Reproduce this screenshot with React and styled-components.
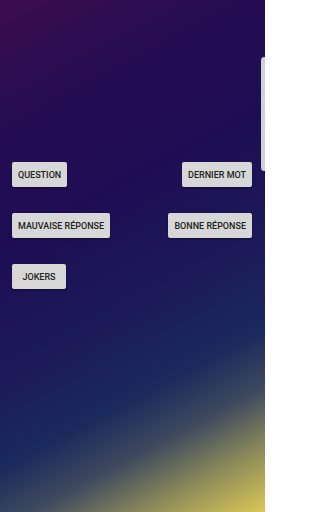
import React from 'react'
import styled, { createGlobalStyle } from 'styled-components'

const GlobalStyle = createGlobalStyle`
  html, body, #root {
    margin: 0;
    padding: 0;
  }
  body {
    font-family: Roboto, "Liberation Sans", sans-serif;
    overflow: hidden;
  }
`

const Screen = styled.div`
  position: relative;
  width: 265px;
  height: 512px;
  overflow: hidden;
  box-sizing: border-box;
  padding: 162px 13px 0 12px;
  background: linear-gradient(
    152deg,
    #3d0c4e 0%,
    #270d52 18%,
    #1e0d55 38%,
    #1c1a58 58%,
    #1b2a5d 72%,
    #3f4a5e 81%,
    #8c8a5a 90%,
    #dcc756 100%
  );
`

const Grid = styled.div`
  display: flex;
  flex-direction: column;
  gap: 26px;
`

const Row = styled.div`
  display: flex;
  justify-content: space-between;
  align-items: center;
`

const Button = styled.button`
  height: 25px;
  min-width: 54px;
  padding: 0 6px;
  border: none;
  border-radius: 2px;
  background: #d7d7d7;
  color: #222;
  font-family: Roboto, "Liberation Sans", sans-serif;
  font-weight: 500;
  font-size: 9px;
  text-transform: uppercase;
  white-space: nowrap;
  box-shadow: 0 1px 2px rgba(0, 0, 0, 0.45);
  cursor: pointer;
`

const DrawerEdge = styled.div`
  position: absolute;
  top: 56px;
  right: -4px;
  width: 7px;
  height: 114px;
  border-radius: 4px 0 0 4px;
  background: #cfd0da;
  border: 1px solid #16103a;
`

export default function App() {
  return (
    <>
      <GlobalStyle />
      <Screen>
        <Grid>
          <Row>
            <Button>Question</Button>
            <Button>Dernier mot</Button>
          </Row>
          <Row>
            <Button>Mauvaise réponse</Button>
            <Button>Bonne réponse</Button>
          </Row>
          <Row>
            <Button>Jokers</Button>
          </Row>
        </Grid>
        <DrawerEdge />
      </Screen>
    </>
  )
}
